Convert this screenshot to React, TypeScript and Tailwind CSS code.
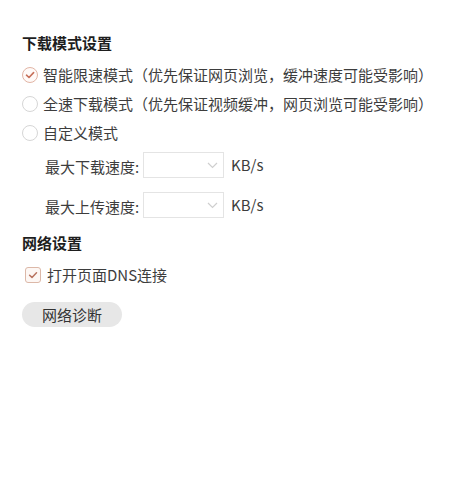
import React from "react";

const font = { fontFamily: '"Noto Sans CJK SC", "Noto Sans", sans-serif' };

function Radio({ checked, label }: { checked?: boolean; label: string }) {
  return (
    <div className="flex h-[29px] items-center">
      <span
        className={
          checked
            ? "flex h-[16px] w-[16px] items-center justify-center rounded-full border border-[#e2b5a5] bg-[#fffaf8]"
            : "h-[16px] w-[16px] rounded-full border border-[#d6d6d6] bg-white"
        }
      >
        {checked && (
          <svg width="10" height="10" viewBox="0 0 10 10" fill="none">
            <path d="M1.5 5.2 L4 7.5 L8.6 2.6" stroke="#c7705a" strokeWidth="1.6" strokeLinecap="round" strokeLinejoin="round" />
          </svg>
        )}
      </span>
      <span className="ml-[5px] text-[15px] leading-[20px] text-[#3d3d3d]">{label}</span>
    </div>
  );
}

function SpeedRow({ label }: { label: string }) {
  return (
    <div className="flex h-[26px] items-center pl-[23px]">
      <span className="w-[98px] pt-[4px] text-[15px] leading-[20px] text-[#3d3d3d]">{label}</span>
      <div className="flex h-[26px] w-[81px] items-center justify-end border border-[#e4e4e4] bg-white pr-[5px]">
        <svg width="11" height="7" viewBox="0 0 11 7" fill="none">
          <path d="M1 1 L5.5 5.5 L10 1" stroke="#cfcfcf" strokeWidth="1.2" />
        </svg>
      </div>
      <span className="ml-[7px] text-[15px] leading-[20px] text-[#3d3d3d]">KB/s</span>
    </div>
  );
}

export default function App() {
  return (
    <div className="h-[492px] w-[467px] bg-white pl-[22px] pt-[33px]" style={font}>
      <h2 className="text-[15px] font-bold leading-[20px] text-[#1e1e1e]">下载模式设置</h2>
      <div className="mt-[7px]">
        <Radio checked label="智能限速模式（优先保证网页浏览，缓冲速度可能受影响）" />
        <Radio label="全速下载模式（优先保证视频缓冲，网页浏览可能受影响）" />
        <Radio label="自定义模式" />
      </div>
      <div className="mt-[5px] flex flex-col gap-[14px]">
        <SpeedRow label="最大下载速度:" />
        <SpeedRow label="最大上传速度:" />
      </div>
      <h2 className="mt-[15px] text-[15px] font-bold leading-[20px] text-[#1e1e1e]">网络设置</h2>
      <div className="mt-[12px] flex h-[20px] items-center pl-[3px]">
        <span className="flex h-[16px] w-[16px] items-center justify-center rounded-[3px] border border-[#dcb8a8] bg-[#fdf7f4]">
          <svg width="10" height="10" viewBox="0 0 10 10" fill="none">
            <path d="M1.6 5.2 L4 7.4 L8.5 2.8" stroke="#b8735f" strokeWidth="1.5" strokeLinecap="round" strokeLinejoin="round" />
          </svg>
        </span>
        <span className="ml-[6px] text-[15px] leading-[20px] text-[#3d3d3d]">打开页面DNS连接</span>
      </div>
      <button className="mt-[17px] flex h-[25px] w-[100px] items-center justify-center rounded-full bg-[#e7e7e7] text-[15px] leading-[20px] text-[#333333]">
        网络诊断
      </button>
    </div>
  );
}
